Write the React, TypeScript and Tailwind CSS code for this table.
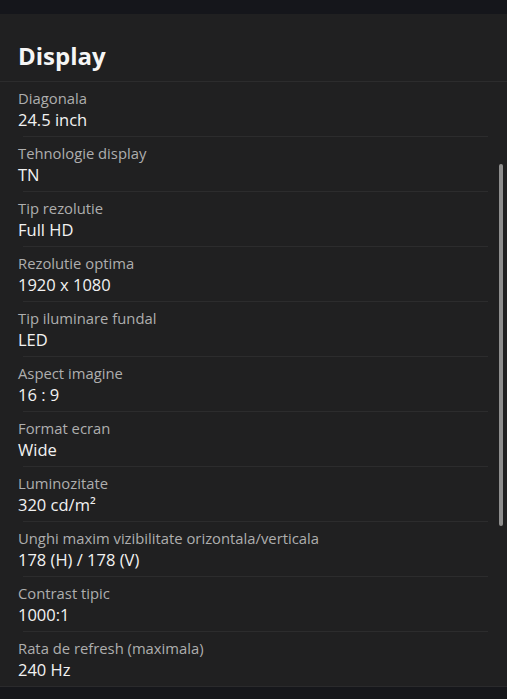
import React from 'react';

const specs = [
  { label: 'Diagonala', value: '24.5 inch' },
  { label: 'Tehnologie display', value: 'TN' },
  { label: 'Tip rezolutie', value: 'Full HD' },
  { label: 'Rezolutie optima', value: '1920 x 1080' },
  { label: 'Tip iluminare fundal', value: 'LED' },
  { label: 'Aspect imagine', value: '16 : 9' },
  { label: 'Format ecran', value: 'Wide' },
  { label: 'Luminozitate', value: '320 cd/m²' },
  { label: 'Unghi maxim vizibilitate orizontala/verticala', value: '178 (H) / 178 (V)' },
  { label: 'Contrast tipic', value: '1000:1' },
  { label: 'Rata de refresh (maximala)', value: '240 Hz' },
];

const App = () => {
  return (
    <div
      className="flex h-[699px] w-full flex-col overflow-hidden bg-[#16171b]"
      style={{ fontFamily: '"Open Sans", "Noto Sans", sans-serif' }}
    >
      <div className="h-[14px] shrink-0 bg-[#15161b]" />

      {/* Panel */}
      <div className="relative h-[672px] shrink-0 bg-[#202021]">
        <div className="flex h-[68px] items-center border-b border-[#2c2c2d] px-[18px] pt-[16px]">
          <h1 className="text-[24px] font-bold leading-none text-[#f5f5f5]">Display</h1>
        </div>

        <div className="flex flex-col">
          {specs.map((s, i) => (
            <div key={s.label} className="relative flex h-[55px] flex-col px-[18px] pt-[6px]">
              <span className="text-[14.8px] leading-[20px] text-[#aeaeae]">{s.label}</span>
              <span className="text-[16.5px] font-medium leading-[23px] text-[#f2f2f2]">{s.value}</span>
              {i < specs.length - 1 && (
                <div className="absolute bottom-0 left-[23px] right-[19px] h-px bg-[#2c2c2d]" />
              )}
            </div>
          ))}
        </div>

        {/* Scrollbar */}
        <div className="absolute left-[499px] top-[150px] h-[362px] w-[4px] rounded-full bg-[#8e8e8e]" />
      </div>

      <div className="flex-1 border-t border-[#2a2a2c] bg-[#16171b]" />
    </div>
  );
};

export default App;
